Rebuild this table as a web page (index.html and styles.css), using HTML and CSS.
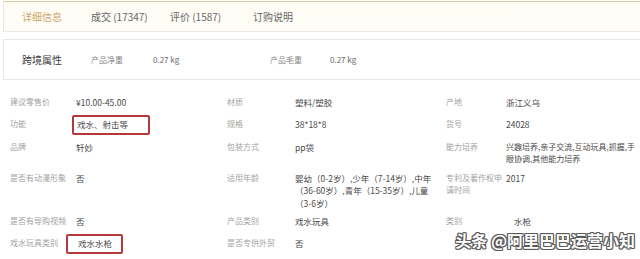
FILE: index.html
```html
<!DOCTYPE html>
<html lang="zh">
<head>
<meta charset="utf-8">
<link rel="stylesheet" href="styles.css">
</head>
<body>
<div class="page">
  <div class="tabs">
    <div class="tab tab-active w1">详细信息</div>
    <div class="tab w2">成交 (17347)</div>
    <div class="tab w3">评价 (1587)</div>
    <div class="tab">订购说明</div>
  </div>
  <div class="cross">
    <div class="cross-title">跨境属性</div>
    <div class="lbl">产品净重</div>
    <div class="val">0.27 kg</div>
    <div class="lbl">产品毛重</div>
    <div class="val">0.27 kg</div>
  </div>
  <div class="attrs">
    <div class="lbl">建议零售价</div><div class="val">¥10.00-45.00</div>
    <div class="lbl">材质</div><div class="val">塑料/塑胶</div>
    <div class="lbl">产地</div><div class="val">浙江义乌</div>

    <div class="lbl">功能</div><div class="val"><span class="mark mark1">戏水、射击等</span></div>
    <div class="lbl">规格</div><div class="val">38*18*8</div>
    <div class="lbl">货号</div><div class="val">24028</div>

    <div class="lbl">品牌</div><div class="val">轩妙</div>
    <div class="lbl">包装方式</div><div class="val">pp袋</div>
    <div class="lbl">能力培养</div><div class="val tight">兴趣培养,亲子交流,互动玩具,抓握,手<br>眼协调,其他能力培养</div>

    <div class="lbl">是否有动漫形象</div><div class="val">否</div>
    <div class="lbl">适用年龄</div><div class="val">婴幼（0-2岁）,少年（7-14岁）,中年<br>（36-60岁）,青年（15-35岁）,儿童<br>（3-6岁）</div>
    <div class="lbl">专利及著作权申<br>请时间</div><div class="val">2017</div>

    <div class="lbl">是否有导购视频</div><div class="val">否</div>
    <div class="lbl">产品类别</div><div class="val">戏水玩具</div>
    <div class="lbl">类别</div><div class="val shift">水枪</div>

    <div class="lbl">戏水玩具类别</div><div class="val"><span class="mark mark2">戏水水枪</span></div>
    <div class="lbl">是否专供外贸</div><div class="val">否</div>
    <div class="lbl"></div><div class="val"></div>
  </div>
  <div class="watermark">头条 @阿里巴巴运营小知</div>
</div>
</body>
</html>
```
FILE: styles.css
```css
* { box-sizing: border-box; }
html, body {
  margin: 0;
  padding: 0;
  background: #fff;
  width: 640px;
  height: 259px;
  overflow: hidden;
}
.page {
  position: relative;
  width: 640px;
  height: 259px;
  padding-top: 1px;
  font-family: "Noto Sans CJK SC", "Noto Sans", sans-serif;
  color: #444;
}
.tabs {
  margin-left: 3px;
  height: 31px;
  display: flex;
  align-items: center;
  padding-left: 18px;
  background: linear-gradient(#fffdf4, #fdfcf6);
  border-top: 1px solid #d9c9a3;
  border-left: 1px solid #ece9df;
  border-bottom: 1px solid #efece4;
  font-size: 10px;
  color: #666;
}
.tab { white-space: nowrap; }
.w1 { width: 69px; }
.w2 { width: 79px; }
.w3 { width: 83px; }
.tab-active { color: #cfa66a; }

.cross {
  margin: 7px 0 0 3px;
  height: 41px;
  border: 1px solid #e8e8e8;
  border-right: none;
  display: grid;
  grid-template-columns: 69px 62px 117px 60px 1fr;
  align-items: center;
  padding-left: 18px;
}
.cross-title { font-size: 10px; color: #3a3a3a; }
.cross .lbl { font-size: 8px; color: #888; line-height: 12px; }
.cross .val { font-size: 8px; color: #666; line-height: 12px; }

.attrs {
  margin-top: 13px;
  padding-left: 10px;
  display: grid;
  grid-template-columns: 66px 151px 68px 151px 60px 1fr;
  grid-auto-rows: minmax(22px, auto);
}
.attrs .lbl,
.attrs .val {
  padding: 3px 0;
  line-height: 12.5px;
  white-space: nowrap;
}
.attrs .lbl {
  font-size: 8px;
  color: #a3a3a3;
}
.attrs .val {
  font-size: 8.5px;
  color: #4a4a4a;
}
.attrs .tight { font-size: 8px; }
.attrs .shift { padding-left: 8px; }

.mark {
  display: inline-block;
  border: 2px solid #b3383b;
  border-radius: 2px;
  line-height: 12.5px;
}
.mark1 {
  margin: -4px 0 0 -4px;
  padding: 1.5px 20px 2px 3px;
}
.mark2 {
  margin: -4px 0 0 -10px;
  padding: 1.5px 9px 2px 10px;
}

.watermark {
  position: absolute;
  right: 5px;
  top: 229px;
  font-size: 16px;
  line-height: 22px;
  font-weight: 700;
  color: #fff;
  white-space: nowrap;
  text-shadow:
    1px 0 0 #5a5a5a, -1px 0 0 #5a5a5a,
    0 1px 0 #5a5a5a, 0 -1px 0 #5a5a5a,
    1px 1px 0 #5a5a5a, -1px -1px 0 #5a5a5a,
    1px -1px 0 #5a5a5a, -1px 1px 0 #5a5a5a;
}
```
